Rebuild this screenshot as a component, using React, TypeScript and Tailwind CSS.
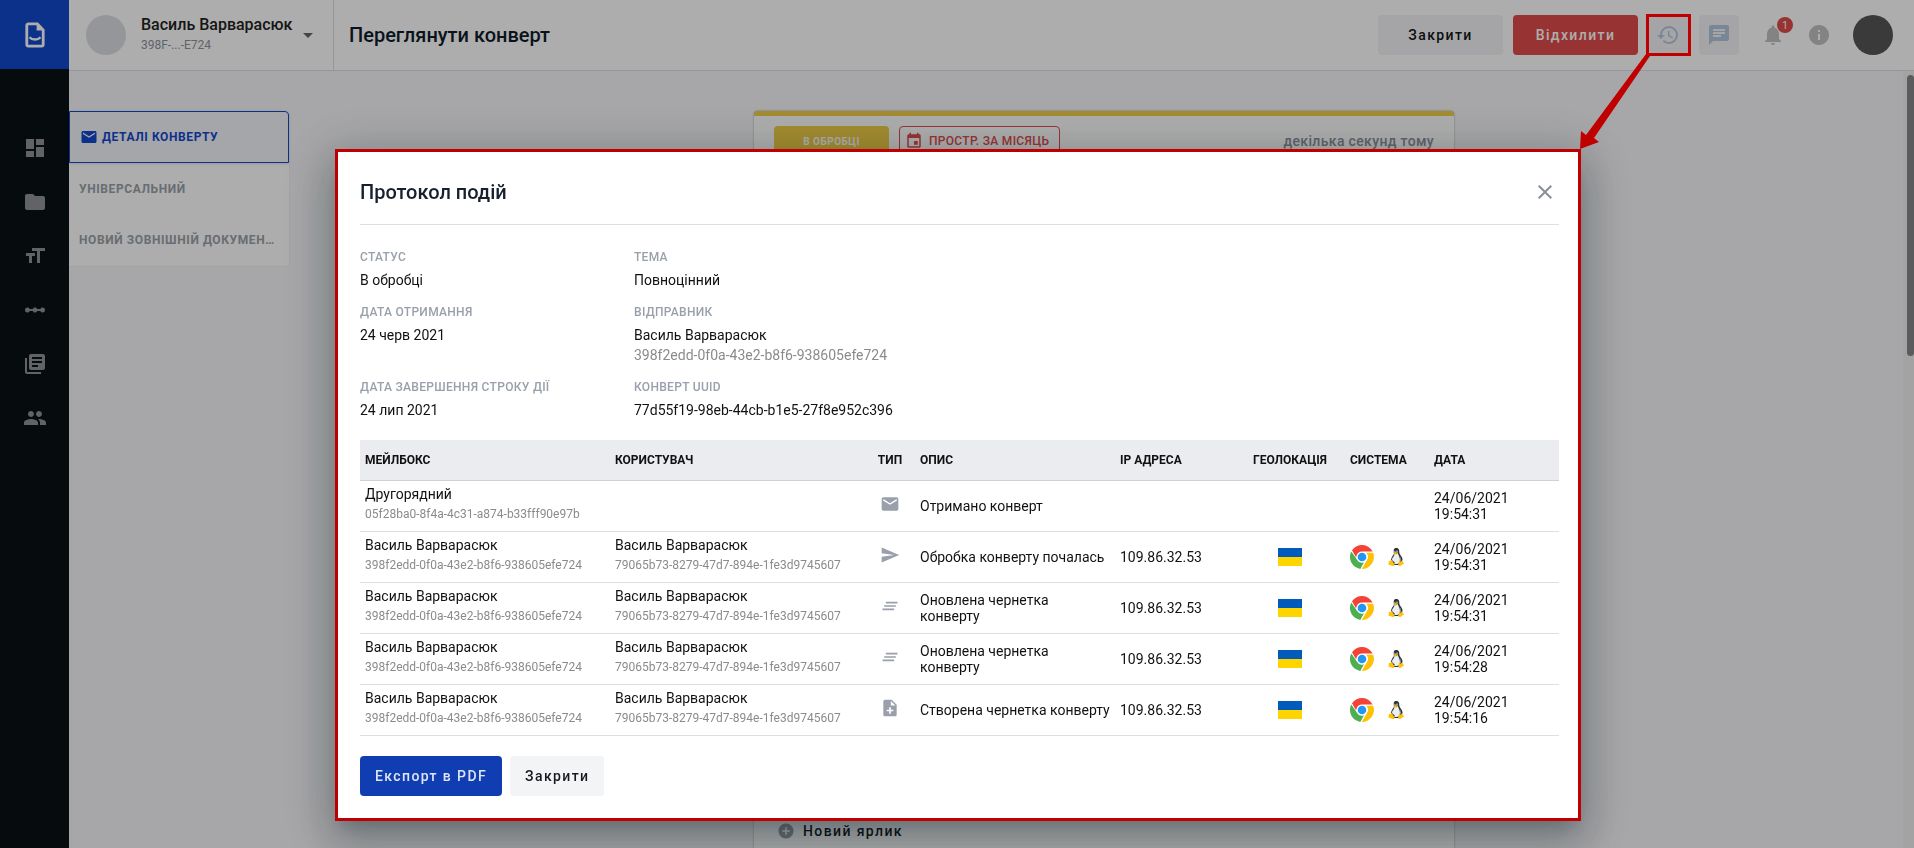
import type { ReactNode } from "react";
import type { IconType } from "react-icons";
import {
  MdAddCircle,
  MdArrowDropDown,
  MdChat,
  MdClearAll,
  MdClose,
  MdDashboard,
  MdEvent,
  MdFolder,
  MdFormatSize,
  MdHistory,
  MdInfo,
  MdLibraryBooks,
  MdLinearScale,
  MdMail,
  MdNoteAdd,
  MdNotifications,
  MdPeople,
  MdSend,
} from "react-icons/md";
import { FcLinux } from "react-icons/fc";

const navigation: { label: string; Icon: IconType }[] = [
  { label: "Панель", Icon: MdDashboard },
  { label: "Папки", Icon: MdFolder },
  { label: "Шаблони", Icon: MdFormatSize },
  { label: "Процеси", Icon: MdLinearScale },
  { label: "Бібліотека", Icon: MdLibraryBooks },
  { label: "Користувачі", Icon: MdPeople },
];

type Party = { name: string; id: string };

type EventRow = {
  mailbox: Party;
  user?: Party;
  Icon: IconType;
  text: string;
  ip?: string;
  time: string;
};

const sender: Party = { name: "Василь Варварасюк", id: "398f2edd-0f0a-43e2-b8f6-938605efe724" };
const author: Party = { name: "Василь Варварасюк", id: "79065b73-8279-47d7-894e-1fe3d9745607" };

const events: EventRow[] = [
  {
    mailbox: { name: "Другорядний", id: "05f28ba0-8f4a-4c31-a874-b33fff90e97b" },
    Icon: MdMail,
    text: "Отримано конверт",
    time: "19:54:31",
  },
  { mailbox: sender, user: author, Icon: MdSend, text: "Обробка конверту почалась", ip: "109.86.32.53", time: "19:54:31" },
  { mailbox: sender, user: author, Icon: MdClearAll, text: "Оновлена чернетка конверту", ip: "109.86.32.53", time: "19:54:31" },
  { mailbox: sender, user: author, Icon: MdClearAll, text: "Оновлена чернетка конверту", ip: "109.86.32.53", time: "19:54:28" },
  { mailbox: sender, user: author, Icon: MdNoteAdd, text: "Створена чернетка конверту", ip: "109.86.32.53", time: "19:54:16" },
];

function Logo() {
  return (
    <svg viewBox="0 0 20 26" className="h-[26px] w-5" fill="none" aria-hidden="true">
      <path
        d="M3 1.8h9.4L18.2 8v14.6a1.6 1.6 0 0 1-1.6 1.6H3.4a1.6 1.6 0 0 1-1.6-1.6V3.4A1.6 1.6 0 0 1 3.4 1.8"
        stroke="#fff"
        strokeWidth="2.8"
      />
      <path d="M11.6 1.5v7h7z" fill="#fff" />
      <path d="M4.5 15.2c2.6 3 8.4 3 11 0" stroke="#fff" strokeWidth="2.4" />
    </svg>
  );
}

function ChromeIcon() {
  return (
    <svg viewBox="0 0 48 48" className="size-6" role="img" aria-label="Chrome">
      <circle cx="24" cy="24" r="24" fill="#fff" />
      <path d="M4 10.6A24 24 0 0 1 45.2 13H24a11.2 11.2 0 0 0-10.4 7.2L12 24.4z" fill="#f44336" />
      <path d="M2.6 13A24 24 0 0 0 20.6 47.8L28 34.6a11.3 11.3 0 0 1-14-5.2z" fill="#4caf50" />
      <path d="M46.3 15.4A24 24 0 0 1 23.6 48l10-17.6a11.3 11.3 0 0 0-1.4-15z" fill="#ffc107" />
      <circle cx="24" cy="24" r="8.6" fill="#2196f3" />
    </svg>
  );
}

function UkraineFlag() {
  return (
    <svg viewBox="0 0 24 18" className="mx-auto h-[18px] w-6" role="img" aria-label="Україна">
      <path d="M0 0h24v9H0z" fill="#005bbb" />
      <path d="M0 9h24v9H0z" fill="#ffd500" />
    </svg>
  );
}

function Sidebar() {
  return (
    <aside className="flex w-[69px] shrink-0 flex-col bg-[#0a1116]">
      <a href="#home" aria-label="Головна" className="flex h-[69px] items-center justify-center bg-[#1349cc]">
        <Logo />
      </a>
      <nav className="mt-[67px] flex flex-col items-center gap-[30px] text-[#8f9294]">
        {navigation.map(({ label, Icon }) => (
          <a key={label} href="#section" aria-label={label}>
            <Icon className="size-6" />
          </a>
        ))}
      </nav>
    </aside>
  );
}

function Header() {
  return (
    <header className="flex h-[71px] shrink-0 items-center border-b border-[#dcdee3] bg-white">
      <button type="button" className="flex h-full w-[265px] items-center border-r border-[#dcdee3] pl-[17px] text-left">
        <span className="size-10 rounded-full bg-[#dcdee2]" />
        <span className="ml-[15px] flex flex-col">
          <span className="text-base leading-5 font-medium text-[#222]">Василь Варварасюк</span>
          <span className="text-xs leading-5 text-[#8c939b]">398F-...-E724</span>
        </span>
        <MdArrowDropDown className="ml-1 size-6 text-[#666]" />
      </button>
      <h1 className="ml-[15px] text-xl font-medium text-[#0f1b2d]">Переглянути конверт</h1>
      <div className="ml-auto flex items-center pr-[21px]">
        <button type="button" className="h-10 w-[125px] rounded bg-[#f3f4f6] text-sm font-medium tracking-widest text-[#111418]">
          Закрити
        </button>
        <button type="button" className="ml-2.5 h-10 w-[125px] rounded bg-[#e04c4c] text-sm font-medium tracking-widest text-white">
          Відхилити
        </button>
        <button type="button" aria-label="Протокол подій" className="ml-2.5 flex size-10 items-center justify-center rounded bg-[#f3f4f6]">
          <MdHistory className="size-6 text-[#b3c6de]" />
        </button>
        <button type="button" aria-label="Коментарі" className="ml-[11px] flex size-10 items-center justify-center rounded bg-[#f3f4f6]">
          <MdChat className="size-6 text-[#b3c6de]" />
        </button>
        <button type="button" aria-label="Сповіщення" className="relative ml-[22px]">
          <MdNotifications className="size-6 text-[#c2c2c2]" />
          <span className="absolute -top-1.5 left-4 flex size-4 items-center justify-center rounded-full bg-[#e04c4c] text-[10px] text-white">
            1
          </span>
        </button>
        <button type="button" aria-label="Довідка" className="ml-[22px]">
          <MdInfo className="size-6 text-[#c2c2c2]" />
        </button>
        <span className="ml-[22px] size-10 rounded-full bg-[#565656]" />
      </div>
    </header>
  );
}

function Tabs() {
  return (
    <nav className="mt-10 w-[220px] self-start bg-white text-xs font-bold tracking-wider text-[#9aa1a9] shadow-[0_0_1px_rgba(0,0,0,0.15)]">
      <a
        href="#details"
        className="flex h-[52px] items-center gap-1 rounded-tr border border-[#1349cc] bg-[#f4f5fb] px-2.5 text-[#1349cc] shadow"
      >
        <MdMail className="size-[18px]" />
        ДЕТАЛІ КОНВЕРТУ
      </a>
      <a href="#universal" className="flex h-[52px] items-center px-2.5">
        УНІВЕРСАЛЬНИЙ
      </a>
      <a href="#document" className="block h-[51px] px-2.5 leading-[51px] whitespace-nowrap">
        НОВИЙ ЗОВНІШНІЙ ДОКУМЕН…
      </a>
    </nav>
  );
}

function EnvelopeCard() {
  return (
    <div className="flex min-w-0 flex-1 justify-center pt-10 pl-4">
      <section className="flex w-full max-w-[700px] flex-col rounded-t border-t-[5px] border-[#f0ce46] bg-white px-5 pt-2.5 shadow-[0_0_2px_rgba(0,0,0,0.4)]">
        <div className="flex items-center">
          <span className="flex h-[30px] w-[115px] items-center justify-center rounded bg-[#f0ce46] text-[10px] font-bold tracking-wider text-white">
            В ОБРОБЦІ
          </span>
          <span className="ml-2.5 flex h-[30px] items-center gap-1.5 rounded border border-[#e04c4c] px-[5px] pr-2.5 text-xs font-medium tracking-wide text-[#e04c4c]">
            <MdEvent className="size-[18px]" />
            ПРОСТР. ЗА МІСЯЦЬ
          </span>
          <time className="ml-auto text-sm font-medium tracking-wide text-[#8c939b]">декілька секунд тому</time>
        </div>
        <button type="button" className="mt-auto mb-[7px] flex items-center gap-2 pl-[3px] text-sm font-medium tracking-widest text-[#16191d]">
          <MdAddCircle className="size-[18px] text-[#9aa1a9]" />
          Новий ярлик
        </button>
      </section>
    </div>
  );
}

function Field({ label, children }: { label: string; children: ReactNode }) {
  return (
    <div>
      <dt className="mb-1 text-xs leading-[18px] font-medium tracking-wide text-[#99a0ab]">{label}</dt>
      <dd className="text-sm leading-5 text-[#111]">{children}</dd>
    </div>
  );
}

function PartyCell({ party }: { party?: Party }) {
  return (
    <td className="px-[5px] pt-[3px] align-top leading-5">
      {party && (
        <>
          <div>{party.name}</div>
          <div className="text-xs leading-5 text-[#8b8b8b]">{party.id}</div>
        </>
      )}
    </td>
  );
}

function EventsTable() {
  return (
    <table className="mt-5 w-full table-fixed border-collapse text-left text-sm leading-4 text-[#111]">
      <colgroup>
        <col className="w-[250px]" />
        <col className="w-[255px]" />
        <col className="w-[50px]" />
        <col className="w-[200px]" />
        <col className="w-[120px]" />
        <col className="w-[110px]" />
        <col className="w-[84px]" />
        <col />
      </colgroup>
      <thead>
        <tr className="h-10 border-b border-[#cfd1d6] bg-[#ebecf0] text-xs">
          <th className="px-[5px] font-bold">МЕЙЛБОКС</th>
          <th className="px-[5px] font-bold">КОРИСТУВАЧ</th>
          <th className="px-[5px] text-center font-bold">ТИП</th>
          <th className="px-[5px] font-bold">ОПИС</th>
          <th className="px-[5px] font-bold">IP АДРЕСА</th>
          <th className="px-[5px] text-center font-bold">ГЕОЛОКАЦІЯ</th>
          <th className="px-[5px] font-bold">СИСТЕМА</th>
          <th className="px-[5px] font-bold">ДАТА</th>
        </tr>
      </thead>
      <tbody>
        {events.map(({ mailbox, user, Icon, text, ip, time }, index) => (
          <tr key={index} className="h-[51px] border-b border-[#dfdfdf]">
            <PartyCell party={mailbox} />
            <PartyCell party={user} />
            <td className="pb-1">
              <Icon className="mx-auto size-5 text-[#99a0ab]" />
            </td>
            <td className="pr-1 pl-[5px]">{text}</td>
            <td className="px-[5px]">{ip}</td>
            <td>{ip && <UkraineFlag />}</td>
            <td className="px-[5px]">
              {ip && (
                <div className="flex items-center gap-2.5">
                  <ChromeIcon />
                  <FcLinux className="size-6" aria-label="Linux" />
                </div>
              )}
            </td>
            <td className="px-[5px]">
              24/06/2021
              <br />
              {time}
            </td>
          </tr>
        ))}
      </tbody>
    </table>
  );
}

function EventLogDialog() {
  return (
    <div className="fixed inset-0 flex items-start justify-center bg-black/32 pt-[149px] pl-0.5">
      <div
        role="dialog"
        aria-labelledby="log-title"
        className="w-full max-w-[1246px] border-[3px] border-[#c00000] bg-white pr-[19px] pb-[22px] pl-[22px] shadow-[0_11px_15px_-7px_rgba(10,31,38,0.2),0_24px_38px_3px_rgba(10,31,38,0.14),0_9px_46px_8px_rgba(10,31,38,0.22)]"
      >
        <div className="flex h-[73px] items-center justify-between border-b border-[#dfdfdf] pt-2">
          <h2 id="log-title" className="text-xl font-medium text-[#16202e]">
            Протокол подій
          </h2>
          <button type="button" aria-label="Закрити вікно" className="mr-0.5">
            <MdClose className="size-6 text-[#8a8f96]" />
          </button>
        </div>
        <dl className="mt-[23px] grid grid-cols-[274px_1fr] gap-y-[13px]">
          <Field label="СТАТУС">В обробці</Field>
          <Field label="ТЕМА">Повноцінний</Field>
          <Field label="ДАТА ОТРИМАННЯ">24 черв 2021</Field>
          <Field label="ВІДПРАВНИК">
            {sender.name}
            <div className="text-[#8b8b8b]">{sender.id}</div>
          </Field>
          <Field label="ДАТА ЗАВЕРШЕННЯ СТРОКУ ДІЇ">24 лип 2021</Field>
          <Field label="КОНВЕРТ UUID">77d55f19-98eb-44cb-b1e5-27f8e952c396</Field>
        </dl>
        <EventsTable />
        <div className="mt-5 flex gap-2 text-sm font-medium tracking-widest">
          <button type="button" className="h-10 rounded bg-[#113db3] px-[15px] text-[#dfe5f5]">
            Експорт в PDF
          </button>
          <button type="button" className="h-10 rounded bg-[#f3f4f6] px-[15px] text-[#16191d]">
            Закрити
          </button>
        </div>
      </div>
      <div className="absolute top-3.5 right-[223px] h-[42px] w-[45px] border-[3px] border-[#c00000]" />
      <svg viewBox="0 0 74 98" className="absolute top-[53px] right-[262px] h-[98px] w-[74px]" fill="#c00000" aria-hidden="true">
        <path d="M68 1l4 2L16 85l5 4L2 96 3 78l5 4z" />
      </svg>
    </div>
  );
}

export default function App() {
  return (
    <div className="flex h-screen overflow-hidden font-[Roboto,'Liberation_Sans',sans-serif]">
      <Sidebar />
      <div className="flex min-w-0 flex-1 flex-col bg-[#f6f6f9]">
        <Header />
        <main className="flex min-h-0 flex-1">
          <Tabs />
          <EnvelopeCard />
          <div className="flex w-[11px] justify-end bg-[#f0f0f0] pt-1">
            <div className="h-[281px] w-[7px] rounded-full bg-[#86878a]" />
          </div>
        </main>
      </div>
      <EventLogDialog />
    </div>
  );
}
